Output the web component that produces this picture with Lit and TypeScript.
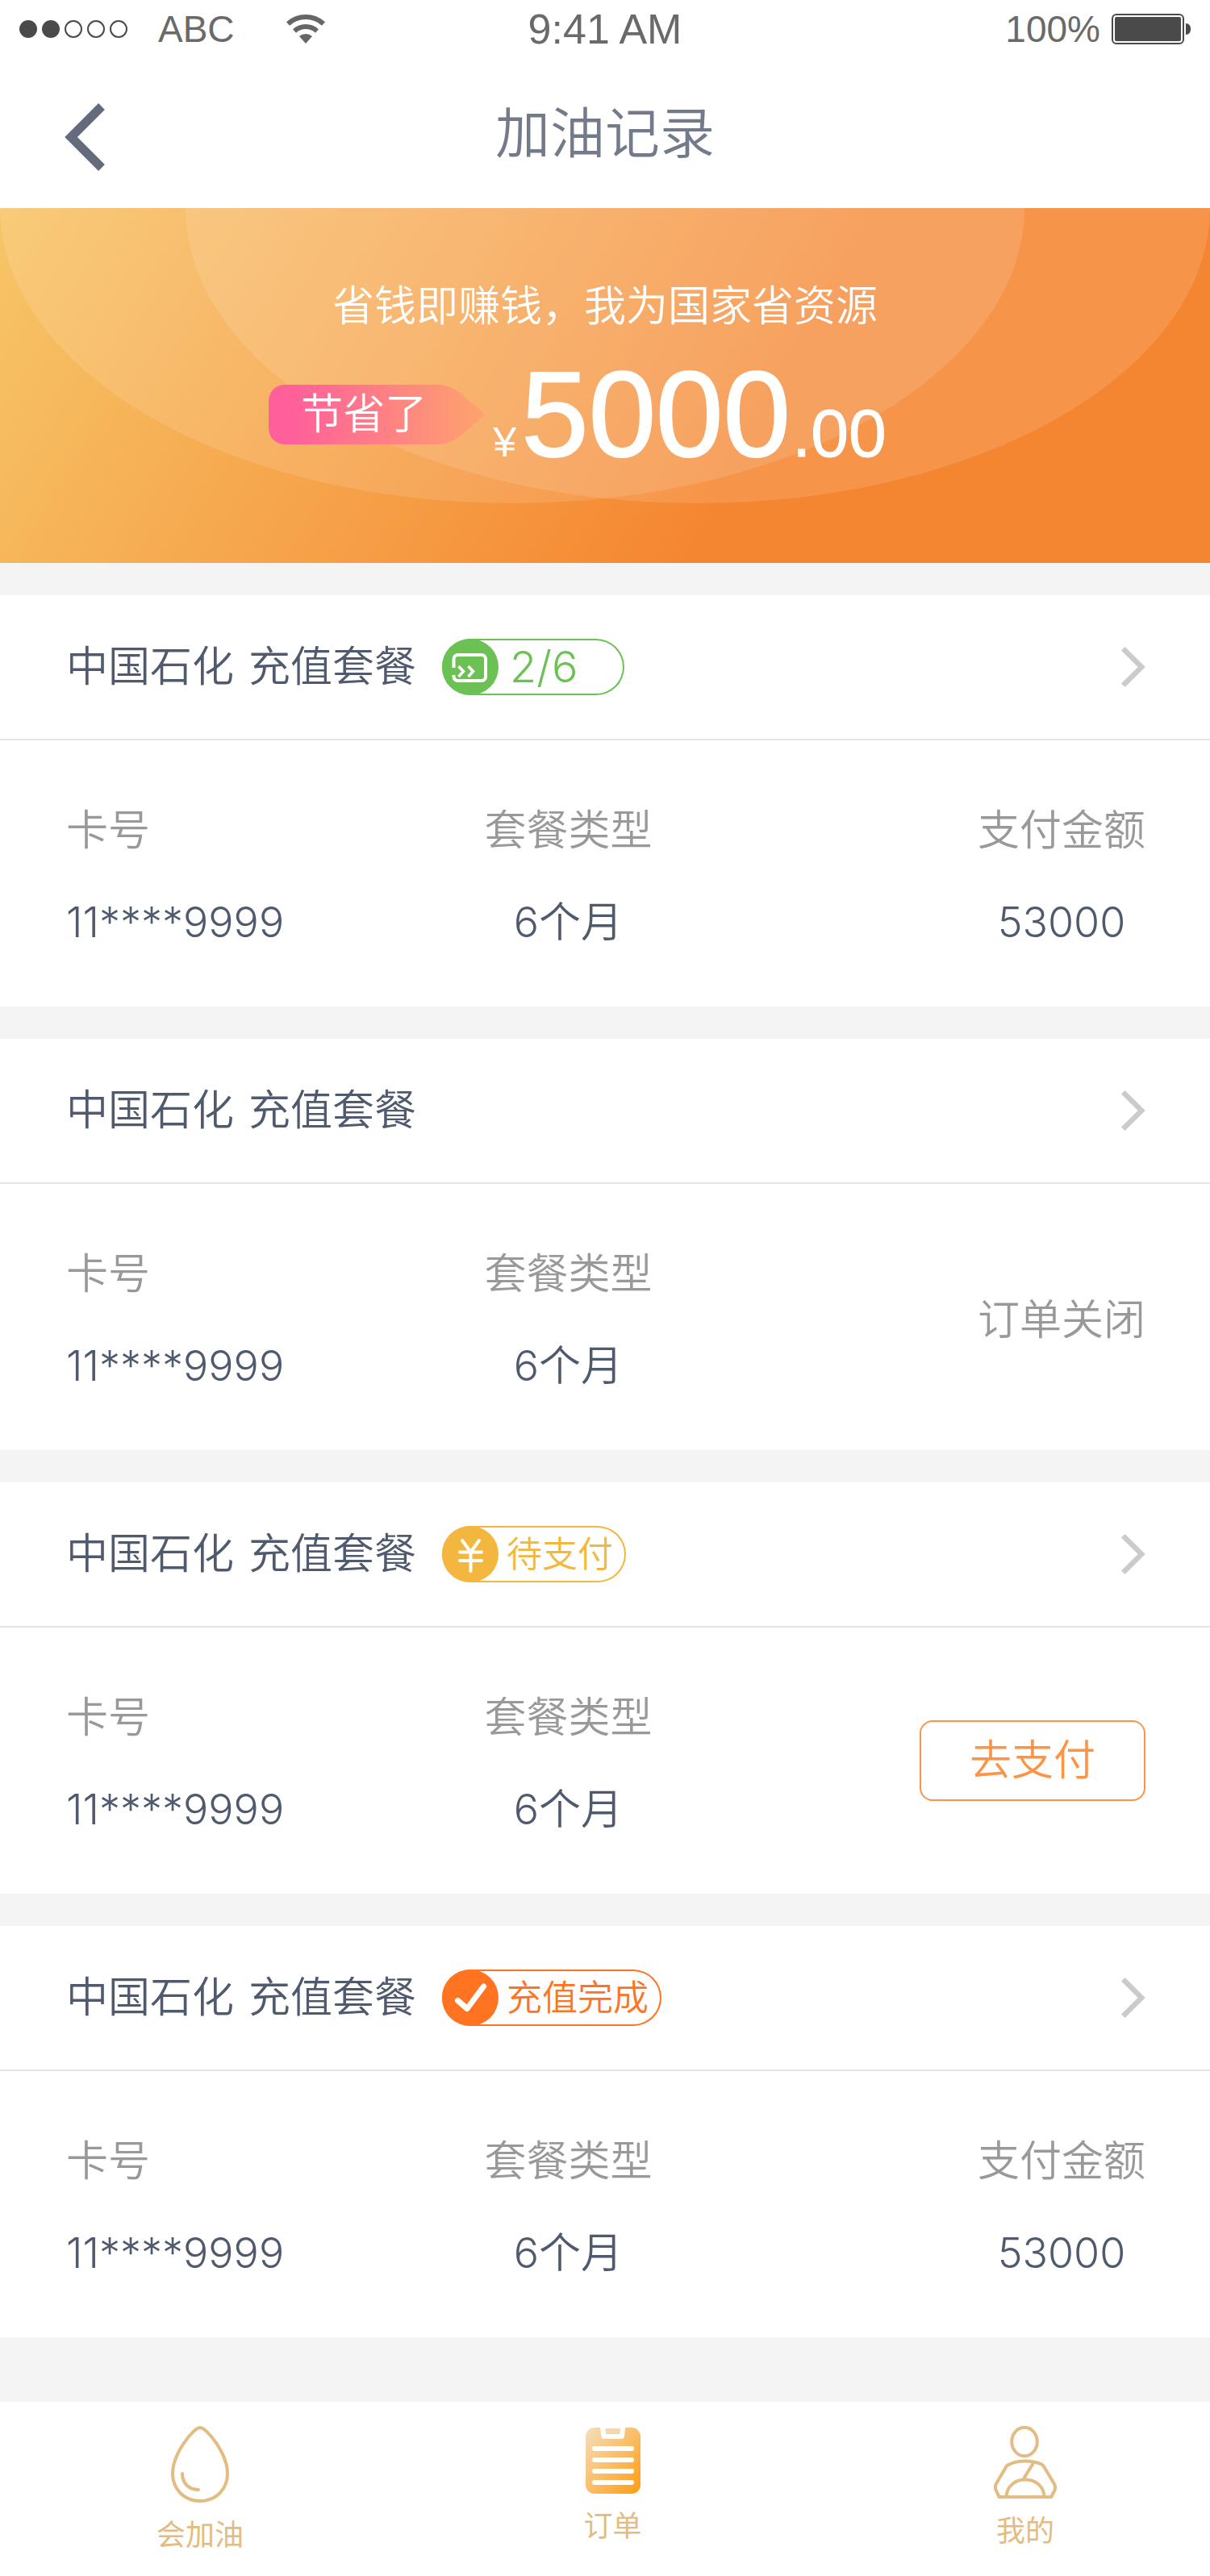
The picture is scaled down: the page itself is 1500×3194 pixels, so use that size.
import { LitElement, html, svg, css, nothing, TemplateResult } from "lit";
import { customElement, property } from "lit/decorators.js";

type Status = "progress" | "pending" | "done" | "closed";

interface Order {
  status: Status;
  badge?: string;
  card: string;
  plan: string;
  amount?: string;
}

const ORDERS: Order[] = [
  { status: "progress", badge: "2/6", card: "11****9999", plan: "6个月", amount: "53000" },
  { status: "closed", card: "11****9999", plan: "6个月" },
  { status: "pending", badge: "待支付", card: "11****9999", plan: "6个月" },
  { status: "done", badge: "充值完成", card: "11****9999", plan: "6个月", amount: "53000" },
];

const BADGE_ICONS: Record<string, TemplateResult> = {
  progress: svg`
    <path d="M14.500 36V25a5 5 0 0 1 5-5H49a5 5 0 0 1 5 5V47a5 5 0 0 1-5 5H19.500a5 5 0 0 1-5-5V45" stroke-width="4"/>
    <path d="M20.500 34l6 6.500-6 6.500M32.500 34l6 6.500-6 6.500" stroke-width="3.500"/>`,
  pending: svg`
    <path d="M25 18L35.500 32.500L46 18M22 32.500H49M22 43H49M35.500 32.500V56" stroke-width="4" stroke-linecap="round" stroke-linejoin="round"/>`,
  done: svg`
    <path d="M19.500 38.500L31 48.500L51.500 21" stroke-width="7" stroke-linecap="round" stroke-linejoin="round"/>`,
};

@customElement("order-badge")
export class OrderBadge extends LitElement {
  static styles = css`
    :host { display: block; }
    .pill {
      display: flex;
      align-items: center;
      box-sizing: border-box;
      height: 70px;
      min-width: 226px;
      padding-right: 16px;
      border-radius: 35px;
      box-shadow: inset 0 0 0 2px currentColor;
      font-size: 44px;
      font-weight: 350;
      line-height: 70px;
    }
    .progress { color: #6cc154; font-size: 54px; font-weight: 300; }
    .pending { color: #f3b73f; }
    .done { color: #ff7321; }
    .icon { flex: none; width: 70px; height: 70px; margin-right: 10px; }
    .progress .icon { margin-right: 14px; }
  `;

  @property() kind: Status = "progress";
  @property() label = "";

  render() {
    return html`<div class="pill ${this.kind}">
      <svg class="icon" viewBox="0 0 70 70" fill="none" stroke="#fff" aria-hidden="true">
        <circle cx="35" cy="35" r="35" fill="currentColor" stroke="none" />
        ${BADGE_ICONS[this.kind]}
      </svg>
      <span>${this.label}</span>
    </div>`;
  }
}

@customElement("order-card")
export class OrderCard extends LitElement {
  static styles = css`
    :host { display: block; background: #fff; color: #505a6e; }
    .head {
      display: flex;
      align-items: center;
      box-sizing: border-box;
      height: 180px;
      padding: 0 80px 0 82px;
      border-bottom: 2px solid #e4e4e4;
    }
    .title {
      display: flex;
      gap: 18px;
      margin: 0 32px 0 0;
      font-size: 52px;
      font-weight: 350;
      line-height: 74px;
    }
    .more { display: flex; margin-left: auto; }
    .body {
      display: grid;
      grid-template-columns: 39fr 15fr 46fr;
      align-items: center;
      padding: 75px 80px 67px 82px;
      font-size: 52px;
      font-weight: 350;
      line-height: 74px;
    }
    .field {
      display: flex;
      flex-direction: column;
      align-items: center;
      gap: 40px;
      justify-self: start;
      margin: 0;
      white-space: nowrap;
    }
    .field.number { align-items: flex-start; }
    .field.amount { justify-self: end; }
    dt { color: #999; }
    dd { margin: 0; }
    .closed { justify-self: end; margin: 0; color: #999; }
    .pay {
      justify-self: end;
      box-sizing: border-box;
      width: 280px;
      height: 100px;
      margin: 0 0 8px;
      padding: 0;
      border: 2px solid #fc9345;
      border-radius: 16px;
      background: #fff;
      color: #fc9345;
      font: inherit;
    }
  `;

  @property({ attribute: false }) order!: Order;

  private renderSide() {
    const { status, amount } = this.order;
    if (status === "closed") return html`<p class="closed">订单关闭</p>`;
    if (status === "pending") return html`<button class="pay" type="button">去支付</button>`;
    return html`<dl class="field amount"><dt>支付金额</dt><dd>${amount}</dd></dl>`;
  }

  render() {
    const { status, badge, card, plan } = this.order;
    return html`
      <div class="head">
        <h2 class="title"><span>中国石化</span><span>充值套餐</span></h2>
        ${badge ? html`<order-badge .kind=${status} .label=${badge}></order-badge>` : nothing}
        <a class="more" href="#detail" aria-label="查看详情">
          <svg width="30" height="50" viewBox="0 0 30 50" fill="none" stroke="#cbcbcb" stroke-width="6.500" aria-hidden="true">
            <path d="M2.300 2.300L25.200 25L2.300 47.700" />
          </svg>
        </a>
      </div>
      <div class="body">
        <dl class="field number"><dt>卡号</dt><dd>${card}</dd></dl>
        <dl class="field"><dt>套餐类型</dt><dd>${plan}</dd></dl>
        ${this.renderSide()}
      </div>
    `;
  }
}

@customElement("app-root")
export class AppRoot extends LitElement {
  static styles = css`
    :host {
      display: block;
      background: #f4f4f4;
      font-family: Inter, "Noto Sans CJK SC", sans-serif;
    }
    .top { background: #fff; }
    .status {
      display: grid;
      grid-template-columns: 1fr auto 1fr;
      align-items: center;
      height: 72px;
      padding: 0 24px;
      font-family: "Liberation Sans", sans-serif;
      color: #6a6a6a;
      line-height: 72px;
    }
    .signal { display: flex; align-items: center; }
    .carrier { margin: 0 64px 0 38px; font-size: 46px; }
    .clock { font-size: 52px; }
    .power { display: flex; align-items: center; justify-content: flex-end; gap: 14px; font-size: 46px; }
    .nav {
      display: grid;
      grid-template-columns: 1fr auto 1fr;
      align-items: center;
      height: 186px;
      padding: 0 80px;
    }
    .back {
      display: flex;
      justify-self: start;
      margin: 0;
      padding: 10px 0 0;
      border: 0;
      background: none;
    }
    .heading { margin: 0; color: #737b8b; font-size: 68px; font-weight: 350; line-height: 96px; }
    .banner {
      position: relative;
      overflow: hidden;
      display: flex;
      flex-direction: column;
      align-items: center;
      box-sizing: border-box;
      height: 440px;
      padding-top: 92px;
      background: linear-gradient(120deg, #f7c567 0%, #f58631 63%);
      color: #fff;
    }
    .rings { position: absolute; left: 0; top: 0; width: 100%; height: 100%; }
    .slogan { position: relative; margin: 0; font-size: 52px; font-weight: 350; line-height: 60px; }
    .saved {
      position: relative;
      display: flex;
      align-items: center;
      gap: 8px;
      margin: 30px 0 0;
      padding-right: 68px;
    }
    .tag { position: relative; width: 270px; height: 74px; }
    .tag-shape { position: absolute; left: 0; top: 0; }
    .tag-text { position: relative; padding-left: 40px; font-size: 52px; font-weight: 350; line-height: 74px; }
    .money {
      font-family: "Liberation Sans", sans-serif;
      font-size: 150px;
      line-height: 148px;
      white-space: nowrap;
      -webkit-text-stroke: 2px #fff;
    }
    .yen { margin-right: 6px; font-size: 52px; line-height: 1; -webkit-text-stroke: 0; }
    .cents { margin-left: 2px; font-size: 84px; line-height: 1; -webkit-text-stroke: 1px #fff; }
    .list { display: flex; flex-direction: column; gap: 40px; padding: 40px 0 80px; }
    .tabs {
      display: flex;
      justify-content: space-between;
      align-items: flex-start;
      box-sizing: border-box;
      height: 216px;
      padding: 30px 175px 0 194px;
      background: #fff;
    }
    .tab {
      display: flex;
      flex-direction: column;
      align-items: center;
      gap: 16px;
      min-width: 108px;
      color: #e2bc82;
      font-size: 36px;
      line-height: 48px;
      text-decoration: none;
    }
  `;

  render() {
    return html`
      <header class="top">
        <div class="status">
          <div class="signal">
            <svg width="134" height="22" viewBox="0 0 134 22" fill="none" stroke="#4a4a4a" stroke-width="2" aria-hidden="true">
              <circle cx="11" cy="11" r="11" fill="#4a4a4a" stroke="none" />
              <circle cx="39" cy="11" r="11" fill="#4a4a4a" stroke="none" />
              <circle cx="67" cy="11" r="10" />
              <circle cx="95" cy="11" r="10" />
              <circle cx="123" cy="11" r="10" />
            </svg>
            <span class="carrier">ABC</span>
            <svg width="48" height="37" viewBox="0 0 48 37" fill="none" stroke="#666" stroke-width="6" aria-hidden="true">
              <path d="M2 11.500A33 33 0 0 1 46 11.500" />
              <path d="M10 20.400A21 21 0 0 1 38 20.400" />
              <path d="M24 36L16 27A12 12 0 0 1 32 27Z" fill="#666" stroke="none" />
            </svg>
          </div>
          <span class="clock">9:41 AM</span>
          <div class="power">
            <span>100%</span>
            <svg width="98" height="38" viewBox="0 0 98 38" fill="#4a4a4a" aria-hidden="true">
              <rect x="1" y="1" width="88" height="36" rx="5" fill="none" stroke="#4a4a4a" stroke-width="2" />
              <rect x="4" y="4" width="82" height="30" rx="2" />
              <path d="M92 12C96 12 98 15 98 19S96 26 92 26Z" />
            </svg>
          </div>
        </div>
        <div class="nav">
          <button class="back" type="button" aria-label="返回">
            <svg width="50" height="84" viewBox="0 0 50 84" fill="none" stroke="#646b7c" stroke-width="11" aria-hidden="true">
              <path d="M46 4L8 42L46 80" />
            </svg>
          </button>
          <h1 class="heading">加油记录</h1>
        </div>
      </header>

      <section class="banner">
        <svg class="rings" viewBox="0 0 1500 440" preserveAspectRatio="xMidYMin slice" fill="#fff" fill-opacity="0.12" aria-hidden="true">
          <ellipse cx="635" cy="0" rx="635" ry="366" />
          <ellipse cx="865" cy="0" rx="635" ry="366" />
        </svg>
        <p class="slogan">省钱即赚钱，我为国家省资源</p>
        <div class="saved">
          <div class="tag">
            <svg class="tag-shape" width="270" height="74" viewBox="0 0 270 74" aria-hidden="true">
              <defs>
                <linearGradient id="tag" x1="0" x2="1" y1="0" y2="0">
                  <stop offset="0.100" stop-color="#ff5f9b" />
                  <stop offset="1" stop-color="#fda46c" />
                </linearGradient>
              </defs>
              <path d="M20 0H210C224 0 236 8 244 16L269 37L244 58C236 66 224 74 210 74H20A20 20 0 0 1 0 54V20A20 20 0 0 1 20 0Z" fill="url(#tag)" />
            </svg>
            <div class="tag-text">节省了</div>
          </div>
          <div class="money"><span class="yen">¥</span>5000<span class="cents">.00</span></div>
        </div>
      </section>

      <main class="list">
        ${ORDERS.map((order) => html`<order-card .order=${order}></order-card>`)}
      </main>

      <nav class="tabs">
        <a class="tab" href="#fuel">
          <svg width="72" height="95" viewBox="0 0 72 95" fill="none" stroke="#e2bc82" stroke-width="4" stroke-linecap="round" aria-hidden="true">
            <path d="M36 2C28 2 2 34 2 59C2 79 17 93 36 93S70 79 70 59C70 34 44 2 36 2Z" />
            <path d="M14 59C14 71 22 79 34 79" />
          </svg>
          <span>会加油</span>
        </a>
        <a class="tab" href="#orders" aria-current="page">
          <svg width="68" height="84" viewBox="0 0 68 84" aria-hidden="true">
            <defs>
              <linearGradient id="sheet" x1="0" y1="0" x2="1" y2="1">
                <stop offset="0" stop-color="#f4dfc0" />
                <stop offset="1" stop-color="#ff9c10" />
              </linearGradient>
            </defs>
            <rect x="0" y="2" width="68" height="82" rx="11" fill="url(#sheet)" />
            <path d="M18 2H49L48 13Q47.500 16 44 16H23Q20 16 19.500 13Z" fill="#fff" />
            <path d="M24.500 3H43L42.500 10H25Z" fill="#f4d7ab" />
            <g fill="#fff">
              <rect x="8" y="25" width="52" height="6" rx="3" />
              <rect x="8" y="39" width="52" height="6" rx="3" />
              <rect x="8" y="53" width="52" height="6" rx="3" />
              <rect x="8" y="67" width="52" height="6" rx="3" />
            </g>
          </svg>
          <span>订单</span>
        </a>
        <a class="tab" href="#mine">
          <svg width="78" height="90" viewBox="0 0 78 90" fill="none" stroke="#e2bc82" stroke-width="4" stroke-linejoin="round" aria-hidden="true">
            <ellipse cx="38" cy="19.500" rx="15.800" ry="17.700" />
            <path d="M17.500 48.500C28 42 47 42 58 47Q61 48 62.500 51L75 72Q77 76 75.500 79.500L72 86.500Q71.500 88 70 88H6.500L2.500 79Q1 75 3 71.500L15 51Q16 49 17.500 48.500Z" />
            <path d="M15.500 88C16 75 26 66.500 39 66.500S62 75 62.500 88" />
            <path d="M49 46L36 67" />
          </svg>
          <span>我的</span>
        </a>
      </nav>
    `;
  }
}
